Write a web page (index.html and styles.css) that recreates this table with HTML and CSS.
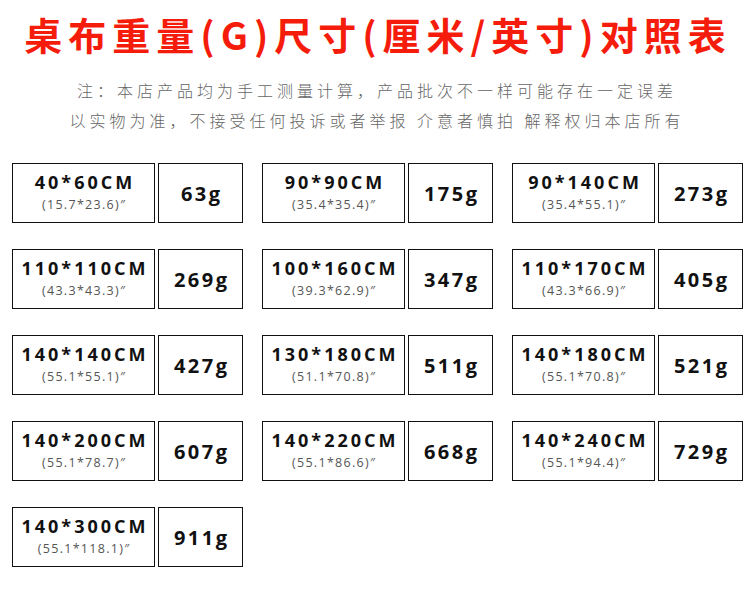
FILE: index.html
```html
<!DOCTYPE html>
<html lang="zh">
<head>
<meta charset="utf-8">
<title>桌布重量尺寸对照表</title>
<link rel="stylesheet" href="styles.css">
</head>
<body>
<div class="page">
  <h1 class="title">桌布重量(G)尺寸(厘米/英寸)对照表</h1>
  <div class="note">
    <p>注：本店产品均为手工测量计算，产品批次不一样可能存在一定误差</p>
    <p>以实物为准，不接受任何投诉或者举报 介意者慎拍 解释权归本店所有</p>
  </div>
  <div class="grid">
    <div class="item"><div class="size"><div class="cm">40*60CM</div><div class="inch">(15.7*23.6)″</div></div><div class="weight">63g</div></div>
    <div class="item"><div class="size"><div class="cm">90*90CM</div><div class="inch">(35.4*35.4)″</div></div><div class="weight">175g</div></div>
    <div class="item"><div class="size"><div class="cm">90*140CM</div><div class="inch">(35.4*55.1)″</div></div><div class="weight">273g</div></div>
    <div class="item"><div class="size"><div class="cm">110*110CM</div><div class="inch">(43.3*43.3)″</div></div><div class="weight">269g</div></div>
    <div class="item"><div class="size"><div class="cm">100*160CM</div><div class="inch">(39.3*62.9)″</div></div><div class="weight">347g</div></div>
    <div class="item"><div class="size"><div class="cm">110*170CM</div><div class="inch">(43.3*66.9)″</div></div><div class="weight">405g</div></div>
    <div class="item"><div class="size"><div class="cm">140*140CM</div><div class="inch">(55.1*55.1)″</div></div><div class="weight">427g</div></div>
    <div class="item"><div class="size"><div class="cm">130*180CM</div><div class="inch">(51.1*70.8)″</div></div><div class="weight">511g</div></div>
    <div class="item"><div class="size"><div class="cm">140*180CM</div><div class="inch">(55.1*70.8)″</div></div><div class="weight">521g</div></div>
    <div class="item"><div class="size"><div class="cm">140*200CM</div><div class="inch">(55.1*78.7)″</div></div><div class="weight">607g</div></div>
    <div class="item"><div class="size"><div class="cm">140*220CM</div><div class="inch">(55.1*86.6)″</div></div><div class="weight">668g</div></div>
    <div class="item"><div class="size"><div class="cm">140*240CM</div><div class="inch">(55.1*94.4)″</div></div><div class="weight">729g</div></div>
    <div class="item"><div class="size"><div class="cm">140*300CM</div><div class="inch">(55.1*118.1)″</div></div><div class="weight">911g</div></div>
  </div>
</div>
</body>
</html>
```

FILE: styles.css
```css
html, body {
  margin: 0;
  padding: 0;
  background: #ffffff;
}

.page {
  width: 750px;
  height: 608px;
  overflow: hidden;
  font-family: "Open Sans", "Noto Sans", "Noto Sans CJK SC", sans-serif;
}

.title {
  margin: 9px 0 0 0;
  padding-left: 6px;
  font-family: "Noto Sans CJK SC", sans-serif;
  font-weight: 700;
  font-size: 38px;
  line-height: 50px;
  letter-spacing: 6px;
  color: #f51c0c;
  text-align: center;
}

.note {
  margin-top: 16px;
  padding-left: 4px;
  text-align: center;
  font-family: "Noto Sans CJK SC", sans-serif;
  font-weight: 300;
  font-size: 16px;
  line-height: 30px;
  letter-spacing: 4px;
  color: #666666;
}

.note p {
  margin: 0;
}

.grid {
  margin-top: 28px;
  padding-left: 12px;
  display: grid;
  grid-template-columns: repeat(3, 231px);
  column-gap: 19px;
  row-gap: 26px;
}

.item {
  display: flex;
  gap: 3px;
  height: 60px;
}

.size {
  box-sizing: border-box;
  width: 143px;
  height: 60px;
  border: 1px solid #111111;
  display: flex;
  flex-direction: column;
  align-items: center;
  justify-content: center;
}

.cm {
  font-weight: 700;
  font-size: 18px;
  line-height: 20px;
  letter-spacing: 3px;
  margin-right: -3px;
  color: #111111;
}

.inch {
  margin-top: 4px;
  font-size: 12.5px;
  line-height: 18px;
  letter-spacing: 1.3px;
  margin-right: -1.3px;
  color: #555555;
}

.weight {
  box-sizing: border-box;
  width: 85px;
  height: 60px;
  border: 1px solid #111111;
  display: flex;
  align-items: center;
  justify-content: center;
  font-weight: 700;
  font-size: 20px;
  letter-spacing: 2.5px;
  padding-left: 2.5px;
  color: #111111;
}
```
